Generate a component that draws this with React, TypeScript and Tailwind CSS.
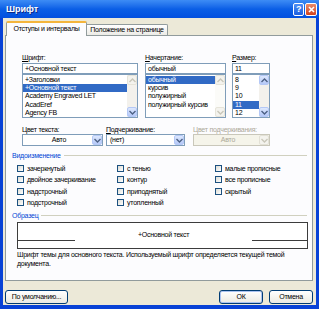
import React from 'react';

const Chevron = ({ color = '#4d6185', up = false }: { color?: string; up?: boolean }) => (
  <svg width="7" height="5" viewBox="0 0 7 5" className="block">
    <path d={up ? 'M0.5 4 L3.5 1 L6.5 4' : 'M0.5 1 L3.5 4 L6.5 1'} fill="none" stroke={color} strokeWidth="1.4" />
  </svg>
);

const ScrollBtn = ({ up, disabled }: { up?: boolean; disabled?: boolean }) => (
  <div
    className={`h-[10px] w-[10px] flex items-center justify-center rounded-[2px] border ${
      disabled ? 'bg-[#f4f3ee] border-[#e6e4d9]' : 'bg-linear-to-b from-[#dde8fe] to-[#b5c8f7] border-[#b4c8f6]'
    }`}
  >
    <Chevron up={up} color={disabled ? '#c9c7ba' : '#4d6185'} />
  </div>
);

const ListBox = ({
  items,
  selected,
  width,
  upDisabled,
  allDisabled,
}: {
  items: string[];
  selected: number;
  width: string;
  upDisabled?: boolean;
  allDisabled?: boolean;
}) => (
  <div className={`${width} h-[44px] border border-[#7f9db9] bg-white flex`}>
    <div className="flex-1 flex flex-col pt-[1px] overflow-hidden">
      {items.map((it, i) => (
        <div
          key={it}
          className={`h-[8.2px] leading-[8.2px] pl-[2px] whitespace-nowrap ${i === selected ? 'bg-[#316ac5] text-white' : ''}`}
        >
          {it}
        </div>
      ))}
    </div>
    <div className={`w-[10px] flex flex-col justify-between ${allDisabled ? 'bg-[#fbfbf8]' : 'bg-[#f3f1ec]'}`}>
      <ScrollBtn up disabled={upDisabled || allDisabled} />
      <ScrollBtn disabled={allDisabled} />
    </div>
  </div>
);

const Dropdown = ({ text, width, center, disabled }: { text: string; width: string; center?: boolean; disabled?: boolean }) => (
  <div className={`${width} h-[12px] border flex ${disabled ? 'border-[#c9c7ba] bg-[#f5f4ea]' : 'border-[#7f9db9] bg-white'}`}>
    <div className={`flex-1 leading-[10px] pl-[3px] ${center ? 'text-center' : ''} ${disabled ? 'text-[#aca899]' : ''}`}>{text}</div>
    <div
      className={`w-[10px] h-[10px] flex items-center justify-center rounded-[2px] border ${
        disabled ? 'bg-[#f4f3ee] border-[#e3e1d6]' : 'bg-linear-to-b from-[#dde8fe] to-[#b5c8f7] border-[#b4c8f6]'
      }`}
    >
      <Chevron color={disabled ? '#c9c7ba' : '#4d6185'} />
    </div>
  </div>
);

const Check = ({ label }: { label: string }) => (
  <div className="h-[11.3px] flex items-center gap-[3px]">
    <div className="w-[7px] h-[7px] border border-[#1c5180] bg-linear-to-br from-[#dcdcd5] to-white" />
    <span className="leading-[9px] whitespace-nowrap">{label}</span>
  </div>
);

const Button = ({ children, width, def }: { children: React.ReactNode; width: string; def?: boolean }) => (
  <div
    className={`${width} h-[14px] rounded-[3px] border border-[#003c74] bg-linear-to-b from-white to-[#ebeae2] flex items-center justify-center ${
      def ? 'shadow-[inset_0_0_0_1px_#a9c2f0]' : ''
    }`}
  >
    {children}
  </div>
);

export default function App() {
  return (
    <div className="w-[319px] h-[309px] bg-[#0842d6] flex flex-col font-['Liberation_Sans',sans-serif] text-[7px] tracking-[-0.25px] text-black overflow-hidden">
      {/* Title bar */}
      <div className="h-[18px] shrink-0 flex items-center pl-[6px] pr-[2px] bg-linear-to-b from-[#3d8cf5] via-[#0b5fe6] to-[#0350df]">
        <span className="text-white font-bold text-[9px] tracking-normal leading-none [text-shadow:1px_1px_0_#0a2a8a]">Шрифт</span>
        <div className="flex-1" />
        <div className="w-[11px] h-[13px] rounded-[2px] border border-white bg-linear-to-b from-[#4e8ff5] to-[#1d5fe0] flex items-center justify-center text-white font-bold text-[9px] leading-none">
          ?
        </div>
        <div className="ml-[1px] w-[12px] h-[13px] rounded-[2px] border border-white bg-linear-to-b from-[#e88a6a] to-[#d2411a] flex items-center justify-center">
          <svg width="7" height="7" viewBox="0 0 7 7">
            <path d="M1 1 L6 6 M6 1 L1 6" stroke="white" strokeWidth="1.6" />
          </svg>
        </div>
      </div>

      {/* Body */}
      <div className="flex-1 mx-[3px] mb-[4px] bg-[#ece9d8] flex flex-col pl-[2px] pr-[3px]">
        {/* Tabs */}
        <div className="h-[15px] mt-[2px] flex items-end pl-[1px] relative z-10">
          <div className="w-[81px] h-[15px] -mb-[1px] bg-[#fcfcfe] border border-b-0 border-[#919b9c] border-t-[2px] border-t-[#f4b53c] rounded-t-[2px] flex items-center justify-center whitespace-nowrap">
            Отступы и интервалы
          </div>
          <div className="w-[81px] h-[11px] bg-linear-to-b from-white to-[#ecebe6] border border-b-0 border-l-0 border-[#919b9c] rounded-tr-[2px] flex items-center justify-center whitespace-nowrap">
            Положение на странице
          </div>
        </div>

        {/* Panel */}
        <div className="h-[246px] border border-[#919b9c] bg-[#fcfcfe] flex flex-col pl-[16px] pr-[5px] pt-[17px]">
          <div className="flex">
            <div className="flex flex-col w-[116px]">
              <div className="h-[10px] leading-[9px]">
                <span className="underline">Ш</span>рифт:
              </div>
              <div className="h-[11px] border border-[#7f9db9] bg-white leading-[9px] pl-[2px]">+Основной текст</div>
              <ListBox
                width="w-[116px]"
                items={['+Заголовки', '+Основной текст', 'Academy Engraved LET', 'AcadEref', 'Agency FB']}
                selected={1}
                upDisabled
              />
            </div>
            <div className="flex flex-col w-[81px] ml-[7px]">
              <div className="h-[10px] leading-[9px]">
                <span className="underline">Н</span>ачертание:
              </div>
              <div className="h-[11px] border border-[#7f9db9] bg-white leading-[9px] pl-[2px]">обычный</div>
              <ListBox
                width="w-[81px]"
                items={['обычный', 'курсив', 'полужирный', 'полужирный курсив']}
                selected={0}
                allDisabled
              />
            </div>
            <div className="flex flex-col w-[38px] ml-[6px]">
              <div className="h-[10px] leading-[9px]">
                <span className="underline">Р</span>азмер:
              </div>
              <div className="h-[11px] border border-[#7f9db9] bg-white leading-[9px] pl-[2px]">11</div>
              <ListBox width="w-[38px]" items={['8', '9', '10', '11', '12']} selected={3} />
            </div>
          </div>

          {/* Dropdown row */}
          <div className="flex mt-[8px]">
            <div className="flex flex-col w-[81px]">
              <div className="h-[8px] leading-[8px]">Цвет текста:</div>
              <Dropdown width="w-[81px]" text="Авто" center />
            </div>
            <div className="flex flex-col w-[79px] ml-[3px]">
              <div className="h-[8px] leading-[8px]">
                <span className="underline">П</span>одчеркивание:
              </div>
              <Dropdown width="w-[79px]" text="(нет)" />
            </div>
            <div className="flex flex-col w-[77px] ml-[8px]">
              <div className="h-[8px] leading-[8px] text-[#aca899] whitespace-nowrap">Цвет подчеркивания:</div>
              <Dropdown width="w-[77px]" text="Авто" center disabled />
            </div>
          </div>

          {/* Видоизменение */}
          <div className="flex items-center -ml-[10px] mt-[5px] h-[9px]">
            <span className="text-[#0046d5] leading-[9px]">Видоизменение</span>
            <div className="flex-1 ml-[3px] h-px bg-[#d0d0bf]" />
          </div>
          <div className="flex -ml-[5px] mt-[3px]">
            <div className="w-[100px] flex flex-col">
              <Check label="зачеркнутый" />
              <Check label="двойное зачеркивание" />
              <Check label="надстрочный" />
              <Check label="подстрочный" />
            </div>
            <div className="w-[98px] flex flex-col">
              <Check label="с тенью" />
              <Check label="контур" />
              <Check label="приподнятый" />
              <Check label="утопленный" />
            </div>
            <div className="flex flex-col">
              <Check label="малые прописные" />
              <Check label="все прописные" />
              <Check label="скрытый" />
            </div>
          </div>

          {/* Образец */}
          <div className="flex items-center -ml-[10px] mt-[3px] h-[9px]">
            <span className="text-[#0046d5] leading-[9px]">Образец</span>
            <div className="flex-1 ml-[3px] h-px bg-[#d0d0bf]" />
          </div>
          <div className="-ml-[5px] mt-[2px] w-[291px] h-[27px] border border-[#3c3c3c] bg-white flex items-center">
            <div className="w-[57px] h-px bg-[#3c3c3c] mt-[10px]" />
            <div className="flex-1 text-center">+Основной текст</div>
            <div className="w-[55px] h-px bg-[#3c3c3c] mt-[10px]" />
          </div>
          <div className="-ml-[5px] mt-[1px] w-[285px] leading-[9px]">
            Шрифт темы для основного текста. Используемый шрифт определяется текущей темой документа.
          </div>
        </div>

        {/* Bottom buttons */}
        <div className="flex mt-[9px]">
          <Button width="w-[63px]">По умолчанию...</Button>
          <div className="flex-1" />
          <Button width="w-[44px]" def>
            ОК
          </Button>
          <div className="w-[6px]" />
          <Button width="w-[44px]">Отмена</Button>
        </div>
      </div>
    </div>
  );
}
